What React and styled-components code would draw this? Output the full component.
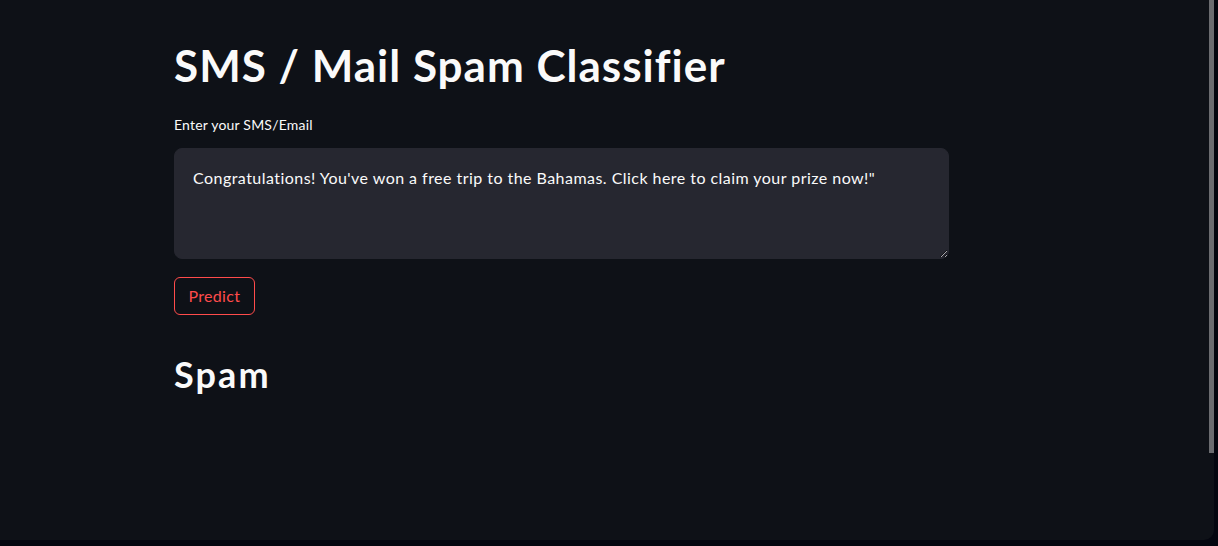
import React from "react";
import styled, { createGlobalStyle } from "styled-components";

const Global = createGlobalStyle`
  html, body { margin: 0; padding: 0; background: #04060f; }
  body { font-family: Lato, "Liberation Sans", sans-serif; }
  * { box-sizing: border-box; }
`;

const Frame = styled.div`
  width: 1218px;
  height: 546px;
  background: #04060f;
  overflow: hidden;
`;

const Main = styled.main`
  position: relative;
  width: 1214px;
  height: 540px;
  background: #0e1117;
  border-bottom-right-radius: 10px;
  overflow: hidden;
`;

const Content = styled.div`
  display: flex;
  flex-direction: column;
  align-items: flex-start;
  width: 775px;
  margin-left: 174px;
  padding-top: 39px;
`;

const Title = styled.h1`
  margin: 0;
  font-size: 44px;
  line-height: 1.2;
  font-weight: 700;
  letter-spacing: 1px;
  color: #fafafa;
`;

const Label = styled.label`
  margin-top: 25px;
  font-size: 14px;
  line-height: 16.8px;
  letter-spacing: 0.2px;
  color: #fafafa;
`;

const TextArea = styled.textarea`
  margin-top: 14px;
  width: 100%;
  height: 111px;
  padding: 16px 18px;
  border: 1px solid #262730;
  border-radius: 8px;
  background: #262730;
  color: #fafafa;
  font-family: Lato, "Liberation Sans", sans-serif;
  font-size: 16px;
  line-height: 1.6;
  letter-spacing: 0.46px;
  color-scheme: dark;
  outline: none;
  resize: vertical;
`;

const Button = styled.button`
  margin-top: 18px;
  height: 38px;
  padding: 0 13.5px;
  border: 1px solid #ff4b4b;
  border-radius: 6px;
  background: transparent;
  color: #ff4b4b;
  font-family: Lato, "Liberation Sans", sans-serif;
  font-size: 16px;
  letter-spacing: 0.3px;
  cursor: pointer;
`;

const Result = styled.h2`
  margin: 38px 0 0;
  font-size: 36px;
  line-height: 1.2;
  font-weight: 700;
  letter-spacing: 2.1px;
  color: #fafafa;
`;

const Scrollbar = styled.div`
  position: absolute;
  top: 0;
  right: 0;
  width: 5px;
  height: 453px;
  background: #6b6c70;
`;

export default function App() {
  return (
    <Frame>
      <Global />
      <Main>
        <Content>
          <Title>SMS / Mail Spam Classifier</Title>
          <Label htmlFor="msg">Enter your SMS/Email</Label>
          <TextArea
            id="msg"
            defaultValue={`Congratulations! You've won a free trip to the Bahamas. Click here to claim your prize now!"`}
          />
          <Button>Predict</Button>
          <Result>Spam</Result>
        </Content>
        <Scrollbar />
      </Main>
    </Frame>
  );
}
